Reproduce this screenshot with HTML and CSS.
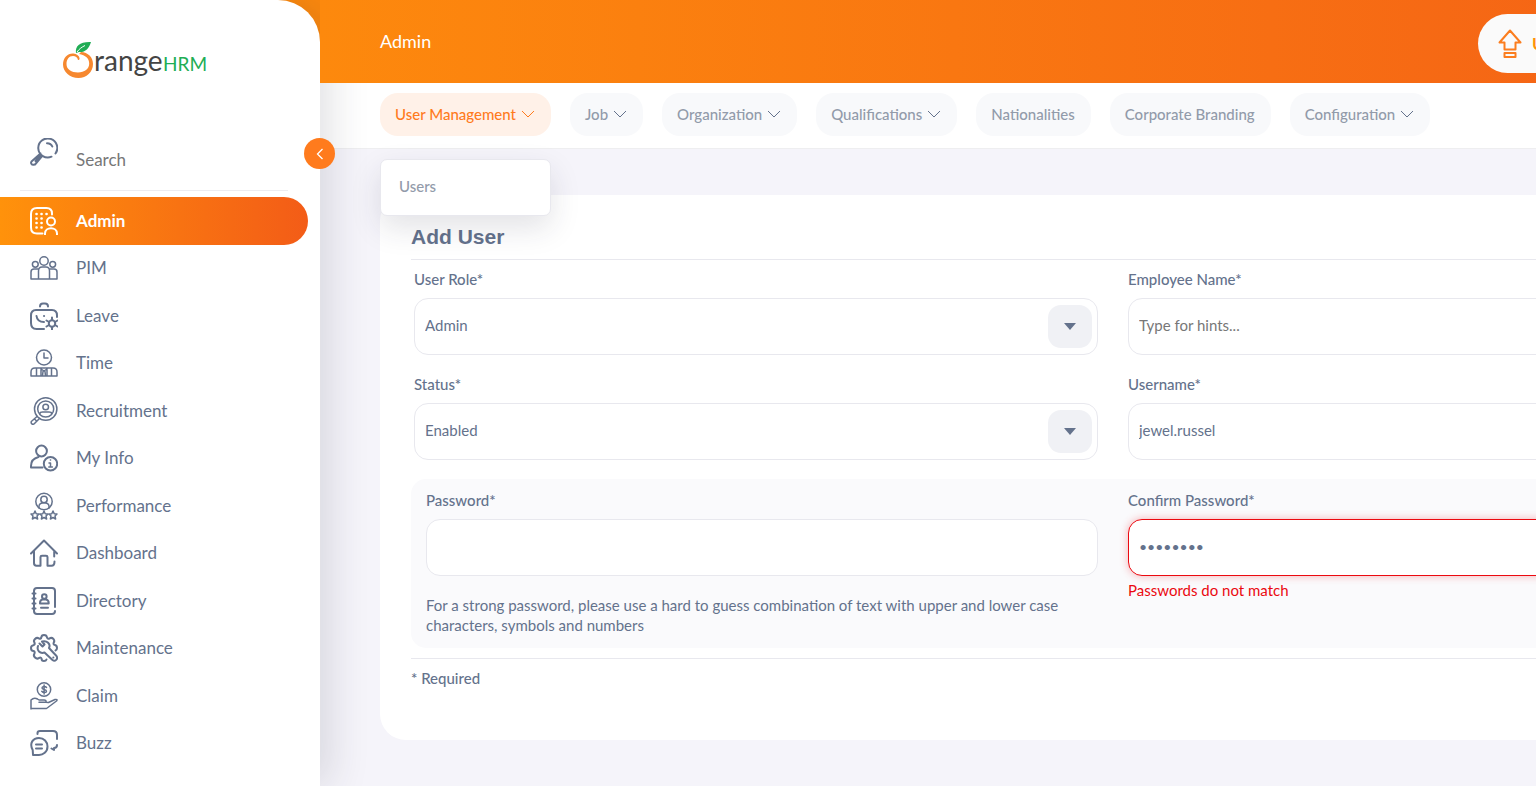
FILE: index.html
```html
<!DOCTYPE html>
<html lang="en">
<head>
<meta charset="utf-8">
<meta name="viewport" content="width=device-width, initial-scale=1">
<title>OrangeHRM</title>
<link rel="stylesheet" href="styles.css">
</head>
<body>
<div class="app">
  <aside class="sidebar">
    <a class="brand" href="#" aria-label="OrangeHRM">
      <svg width="146" height="42" viewBox="0 0 146 42">
        <path fill="#f6882f" fill-rule="evenodd" d="M19 12C26 12.500 31 17 31 24C31 32 24.500 38 16.500 38C8 38 1 32 1 24.500C1 17.500 6 13 11.500 13.500C14.500 14 17 15.500 17.500 18C17.800 19.500 17 20 16 20C15.500 17.500 13.500 16 11 16C7 16 4.500 19.500 4.500 24C4.500 29.500 9.500 32.500 16 32.500C22.500 32.500 27.200 29 27.200 23.500C27.200 18.500 23.500 15 17 14Z"/>
        <path fill="#20ad55" d="M14 13C13 6 18 1.500 29 2C27 9 23 12.500 17 12Z"/>
        <path d="M15 12C17 9 20 7 23 5.500" fill="none" stroke="#fff"/>
        <text class="brand-range" x="32" y="31">range</text>
        <text class="brand-hrm" x="101" y="31">HRM</text>
      </svg>
    </a>
    <button class="collapse" type="button" aria-label="Collapse menu"><svg width="14" height="14" viewBox="0 0 14 14"><path d="M9.500 2L4.500 7L9.500 12"/></svg></button>
    <div class="search">
      <svg class="icon bold" viewBox="0 0 28 28"><path d="M25.500 15.500A9.500 9.500 0 1 0 21.500 18.700M17 5.200C19.500 5.200 21.500 6.500 22.300 8.500M10.500 15.500L1.500 23.500C.5 25 1.500 27 3.500 26.800L5 26.500L12.500 17.700M10 18L5.500 23"/></svg>
      <input type="text" placeholder="Search" aria-label="Search">
    </div>
    <nav class="menu">
      <a class="item active" href="#"><svg class="icon bold" viewBox="0 0 28 28"><path d="M22 7.500V6.500Q22 1 16.500 1H7Q1 1 1 7V20.500Q1 26.500 7 26.500H12.500"/><circle cx="21" cy="14.500" r="4"/><path d="M15 27.500V26.500C15 19.500 27 19.500 27 26.500V27.500"/><path class="dots" d="M6.500 7h.1M11.500 7h.1M16.500 7h.1M6.500 11.500h.1M11.500 11.500h.1M6.500 16h.1M11.500 16h.1M6.500 20.500h.1M11.500 20.500h.1"/></svg>Admin</a>
      <a class="item" href="#"><svg class="icon mid" viewBox="0 0 28 28"><circle cx="14" cy="7" r="4.200"/><circle cx="5.300" cy="10.300" r="2.900"/><circle cx="22.700" cy="10.300" r="2.900"/><path d="M8.500 25V17Q8.500 13 12 13H16Q19.500 13 19.500 17V25M8.500 15H4Q1 15 1 18V25H27V18Q27 15 24 15H19.500"/></svg>PIM</a>
      <a class="item" href="#"><svg class="icon bold" viewBox="0 0 28 28"><path d="M10 4.500Q10 1.500 13 1.500H15Q18 1.500 18 4.500M27 15V13.500Q27 8 22 8H6Q1 8 1 13.500V21Q1 27 6.500 27H14M6.500 14C7 18 9 20 14 20M14 14h.1"/><circle cx="22" cy="21.500" r="3.200"/><path d="M22 15.500V18M22 25V27.500M16.500 18.500L19 20M25 23L27.500 24.500M27.500 18.500L25 20M19 23L16.500 24.500"/></svg>Leave</a>
      <a class="item" href="#"><svg class="icon mid" viewBox="0 0 28 28"><circle cx="14" cy="8.500" r="7.500"/><path d="M14 4V9H18M1 27V23Q1 19 5 19H23Q27 19 27 23V27ZM6.500 19V27M21.500 19V27M11 19V27M17 19V27M11 20L14 22L17 20M13 22.500L12.500 27M15 22.500L15.500 27"/></svg>Time</a>
      <a class="item" href="#"><svg class="icon mid" viewBox="0 0 28 28"><circle cx="15.700" cy="12" r="11.200"/><circle cx="15.700" cy="12" r="8"/><circle cx="15.700" cy="10" r="2.800"/><path d="M10 17V16Q10 15 12.500 15H19Q21.500 15 21.500 16V17M7 19.500L1.300 24.500C.5 27 3 28 4.500 26.500L9.500 21.500M4.500 22L6.800 24.200"/></svg>Recruitment</a>
      <a class="item" href="#"><svg class="icon bold" viewBox="0 0 28 28"><circle cx="11.500" cy="7" r="5.400"/><path d="M12.500 23.500H1V22C1 17 4.500 14 8.500 13"/><circle cx="20.500" cy="19.700" r="6.700"/><path class="fine" d="M20.400 16h.2M19 19H20.500V23M18.800 23H22.400"/></svg>My Info</a>
      <a class="item" href="#"><svg class="icon mid" viewBox="0 0 28 28"><circle cx="14" cy="9.500" r="8.200"/><circle cx="14" cy="7.500" r="3.200"/><path d="M9 16V14C9.500 9.500 18.500 9.500 19 14V16"/><path d="M5 19L6.200 21.800L9 22L7 24L7.600 27L5 25.500L2.400 27L3 24L1 22L3.800 21.800ZM14 19L15.200 21.800L18 22L16 24L16.600 27L14 25.500L11.400 27L12 24L10 22L12.800 21.800ZM23 19L24.200 21.800L27 22L25 24L25.600 27L23 25.500L20.400 27L21 24L19 22L21.800 21.800Z"/></svg>Performance</a>
      <a class="item" href="#"><svg class="icon bold" viewBox="0 0 28 28"><path d="M1 14.500L14 1.500L27 14.500M4 12V24Q4 26.800 6.500 26.800H10.500V18Q10.500 16.800 12 16.800H16Q17.500 16.800 17.500 18V26.800H21.500Q24.500 26.800 24.500 22.500M24.200 12.500V17.500"/></svg>Dashboard</a>
      <a class="item" href="#"><svg class="icon bold" viewBox="0 0 28 28"><path d="M25 20V4Q25 1 22 1H7Q4 1 4 4V24Q4 27 7 27H22Q25 27 25 24M2.500 6.500H5.500M2.500 11.500H5.500M2.500 16.500H5.500M2.500 21.500H5.500M11 20.700H18"/><circle cx="14.300" cy="9.500" r="2.300"/><path d="M10 16.500V16Q10 13 12.500 12.500H16Q18.700 13 18.700 16V16.500Z"/></svg>Directory</a>
      <a class="item" href="#"><svg class="icon bold" viewBox="0 0 28 28"><path d="M16.500 25.500Q16 27 14 27Q11.500 27 11.500 24.500Q11 23 9 24Q7 25.500 5 23.500Q3 21.500 4.500 19.500Q5.200 17.500 3.500 17Q1 17 1 14Q1 11.500 3.500 11.200Q5.200 10.500 4.500 8.500Q3 7 5 5Q7 3 9 4.500Q11 5.200 11.300 3.500Q11.500 1 14 1Q16.700 1 17 3.500Q17.500 5.200 19.500 4.500Q21.500 3 23.500 5Q25 7 23.700 8.700Q23 10.500 25 11Q27 11.500 27 14Q27 16 25.500 16.500"/><path d="M9.500 9.500L12.500 12.500L14.500 10.500L12 7.500C17 6 21 10 19 14L26.500 22C28.500 25 25 28 22.500 26L14.500 18.500C10 20 6.500 16.500 8 12M23.300 23.500h.1"/></svg>Maintenance</a>
      <a class="item" href="#"><svg class="icon mid" viewBox="0 0 28 28"><circle cx="14" cy="7.500" r="6.700"/><path d="M16.500 5.500C15.500 4 12 4 12 6C12 8 16.500 7 16.500 9.300C16.500 11 13 11 11.800 9.300M14.100 3V12M1 27V18Q4 15 7.500 17L9 18H14Q16.500 18 16 20.300H9M16 20.300L18.500 20.500L25 17.500Q28 17 26.500 19L16.500 26.500H1"/></svg>Claim</a>
      <a class="item" href="#"><svg class="icon bold" viewBox="0 0 28 28"><path d="M7.500 5V4Q7.500 2 10 2H23Q27 2 27 6V10M27 16Q27 19 24 19V21L21.500 19.500M3 25.500L2.700 21C-1 14 3 9 9 9C14 9 17.500 13 17.500 17.500C17.500 23 13 26 9 26H3M6 15.500H12M6 19.500H12"/></svg>Buzz</a>
    </nav>
  </aside>

  <main class="main">
    <header class="topbar">
      <h1>Admin</h1>
      <button class="upgrade" type="button"><svg width="24" height="30" viewBox="0 0 24 30"><path d="M12 1.500L1.500 13.500H6.500V20.500H17.500V13.500H22.500ZM6.500 24H17.500V28H6.500Z"/></svg><span>Upgrade</span></button>
    </header>
    <nav class="tabs">
      <div class="tab-wrap">
        <button class="tab current" type="button">User Management<svg class="chev" viewBox="0 0 14 8"><path d="M1 1L7 7L13 1"/></svg></button>
        <div class="dropdown"><a href="#">Users</a></div>
      </div>
      <button class="tab" type="button">Job<svg class="chev" viewBox="0 0 14 8"><path d="M1 1L7 7L13 1"/></svg></button>
      <button class="tab" type="button">Organization<svg class="chev" viewBox="0 0 14 8"><path d="M1 1L7 7L13 1"/></svg></button>
      <button class="tab" type="button">Qualifications<svg class="chev" viewBox="0 0 14 8"><path d="M1 1L7 7L13 1"/></svg></button>
      <a class="tab" href="#">Nationalities</a>
      <a class="tab" href="#">Corporate Branding</a>
      <button class="tab" type="button">Configuration<svg class="chev" viewBox="0 0 14 8"><path d="M1 1L7 7L13 1"/></svg></button>
    </nav>
    <form class="card">
      <h2>Add User</h2>
      <div class="fields">
        <div class="field">
          <label for="role">User Role*</label>
          <div class="select"><select id="role"><option>Admin</option><option>ESS</option></select><span class="arrow"></span></div>
        </div>
        <div class="field">
          <label for="employee">Employee Name*</label>
          <input id="employee" type="text" placeholder="Type for hints...">
        </div>
        <div class="field">
          <label for="status">Status*</label>
          <div class="select"><select id="status"><option>Enabled</option><option>Disabled</option></select><span class="arrow"></span></div>
        </div>
        <div class="field">
          <label for="username">Username*</label>
          <input id="username" type="text" value="jewel.russel">
        </div>
      </div>
      <div class="fields passwords">
        <div class="field">
          <label for="password">Password*</label>
          <input id="password" type="password">
          <p class="hint">For a strong password, please use a hard to guess combination of text with upper and lower case characters, symbols and numbers</p>
        </div>
        <div class="field">
          <label for="confirm">Confirm Password*</label>
          <input id="confirm" class="invalid" type="password" value="password" aria-describedby="confirm-error">
          <p class="error" id="confirm-error">Passwords do not match</p>
        </div>
      </div>
      <p class="required">* Required</p>
    </form>
  </main>
</div>
</body>
</html>
```
FILE: styles.css
```css
* { box-sizing: border-box; }

body {
  margin: 0;
  overflow: hidden;
  background: #f5f4fa;
  color: #64728c;
  font-family: Lato, "Open Sans", sans-serif;
  font-size: 15px;
  line-height: 20px;
}

h1, h2, p { margin: 0; }
a { color: inherit; text-decoration: none; }
button, input, select { font: inherit; color: inherit; }
button { border: 0; cursor: pointer; }

.app {
  display: flex;
  min-width: 1906px;
  min-height: 100vh;
  background: linear-gradient(90deg, #ff920b, #f35c17) 0 0 / 100% 83px no-repeat;
}

/* Sidebar */
.sidebar {
  position: relative;
  z-index: 2;
  flex: 0 0 320px;
  display: flex;
  flex-direction: column;
  height: 100vh;
  padding-bottom: 19px;
  background: #fff;
  border-top-right-radius: 42px;
  box-shadow: 10px 0 40px rgba(40, 40, 60, .14);
}

.brand { padding: 40px 0 0 62px; height: 128px; }
.brand svg { display: block; }
.brand-range { font-size: 28px; fill: #444; }
.brand-hrm { font-size: 19px; fill: #20ad55; }

.collapse {
  position: absolute;
  top: 138px;
  right: -15px;
  display: grid;
  place-items: center;
  width: 31px;
  height: 31px;
  padding: 0;
  border-radius: 50%;
  background: #ff7b1d;
}
.collapse svg { fill: none; stroke: #fff; stroke-width: 1.3; }

.search {
  display: flex;
  align-items: center;
  gap: 18px;
  height: 63px;
  margin: 0 32px 6px 20px;
  padding-left: 10px;
  border-bottom: 1px solid #ececf0;
}
.search .icon { margin-bottom: 14px; }
.search input {
  flex: 1;
  min-width: 0;
  padding: 2px 0 0;
  border: 0;
  outline: 0;
  background: none;
  font-size: 17px;
}
.search input::placeholder { color: #777; }

.menu {
  flex: 1;
  display: grid;
  grid-auto-rows: 1fr;
  margin-right: 12px;
}
.item {
  display: flex;
  align-items: center;
  gap: 18px;
  padding-left: 30px;
  font-size: 17px;
}
.item.active {
  border-radius: 0 24px 24px 0;
  background: linear-gradient(90deg, #ff920b, #f35c17);
  color: #fff;
  font-weight: 700;
}

.icon {
  flex: none;
  width: 28px;
  height: 28px;
  fill: none;
  stroke: currentColor;
  stroke-linecap: round;
  stroke-linejoin: round;
}
.icon.mid { stroke-width: 1.5; }
.icon.bold { stroke-width: 2; }
.icon .dots { stroke-width: 2.6; }
.icon .fine { stroke-width: 1.5; }

/* Main column */
.main { flex: 1; min-width: 0; }

.topbar {
  position: relative;
  z-index: 3;
  display: flex;
  align-items: center;
  justify-content: space-between;
  height: 83px;
  padding: 0 60px;
  background: linear-gradient(90deg, #ff920b -20%, #f35c17);
  color: #fff;
}
.topbar h1 { padding-bottom: 2px; font-size: 18px; font-weight: 400; }
.upgrade {
  display: flex;
  align-items: center;
  gap: 10px;
  width: 368px;
  height: 59px;
  margin-top: 4px;
  padding: 0 20px;
  border-radius: 30px;
  background: #fafafa;
  color: #ff920b;
  font-size: 17px;
  font-weight: 700;
}
.upgrade svg { fill: none; stroke: #fb7d1e; stroke-width: 2; stroke-linejoin: round; }

.tabs {
  display: flex;
  align-items: flex-start;
  gap: 19px;
  height: 66px;
  padding: 10px 60px 0;
  border-bottom: 1px solid #eeeef0;
  background: #fff;
}
.tab-wrap { position: relative; }
.tab {
  display: flex;
  align-items: center;
  gap: 5px;
  height: 43px;
  padding: 0 16px 2px 15px;
  border-radius: 18px;
  background: #f8f9fb;
  color: #929baa;
  font-weight: 500;
}
.tab.current { background: #fff1e8; color: #ff7b1d; }
.chev { width: 14px; height: 8px; fill: none; stroke: #64728c; stroke-width: 1; }
.current .chev { stroke: #ff7b1d; }

.dropdown {
  position: absolute;
  z-index: 1;
  top: 66px;
  left: 0;
  right: 0;
  padding: 16px 18px 19px;
  border: 1px solid #e8e8ee;
  border-radius: 7px;
  background: #fff;
  box-shadow: 0 12px 30px rgba(40, 40, 60, .13);
  color: #929baa;
  font-weight: 500;
}
.dropdown a { display: block; }

/* Form card */
.card {
  margin: 46px 60px;
  padding: 30px 31px 51px;
  border-radius: 26px;
  background: #fff;
}
.card h2 {
  padding-bottom: 10px;
  border-bottom: 1px solid #e8e8ee;
  font-family: "Liberation Sans", Arial, sans-serif;
  font-size: 21px;
  line-height: 24px;
}
.fields {
  display: grid;
  grid-template-columns: 1fr 1fr;
  gap: 20px 30px;
  padding: 10px 3px 19px;
}
.field { display: flex; flex-direction: column; }
.field label { margin-bottom: 10px; font-weight: 500; line-height: 18px; }
.field input, .field select {
  width: 100%;
  height: 57px;
  padding: 0 10px 3px;
  border: 1px solid #e8e8ee;
  border-radius: 14px;
  outline: 0;
  background: #fff;
}
.field select { appearance: none; }
.field input::placeholder { color: #777; opacity: 1; }
.field input[type="password"] { font-size: 14px; }
.field .invalid { border-color: #eb0910; box-shadow: 0 0 8px rgba(235, 9, 16, .3); }

.select { position: relative; }
.arrow {
  position: absolute;
  top: 7px;
  right: 6px;
  display: grid;
  place-items: center;
  width: 44px;
  height: 43px;
  border-radius: 13px;
  background: #f0f1f5;
  pointer-events: none;
}
.arrow::before {
  content: "";
  border: 6px solid transparent;
  border-top: 7px solid #64728c;
  border-bottom: 0;
}

.passwords {
  padding: 12px 15px;
  border-radius: 15px;
  background: #fafafc;
}
.hint { margin-top: 19px; padding-bottom: 1px; }
.error { margin-top: 4px; color: #eb0910; }
.required {
  margin-top: 10px;
  padding: 9px 0 1px;
  border-top: 1px solid #e8e8ee;
  font-weight: 500;
}
```
